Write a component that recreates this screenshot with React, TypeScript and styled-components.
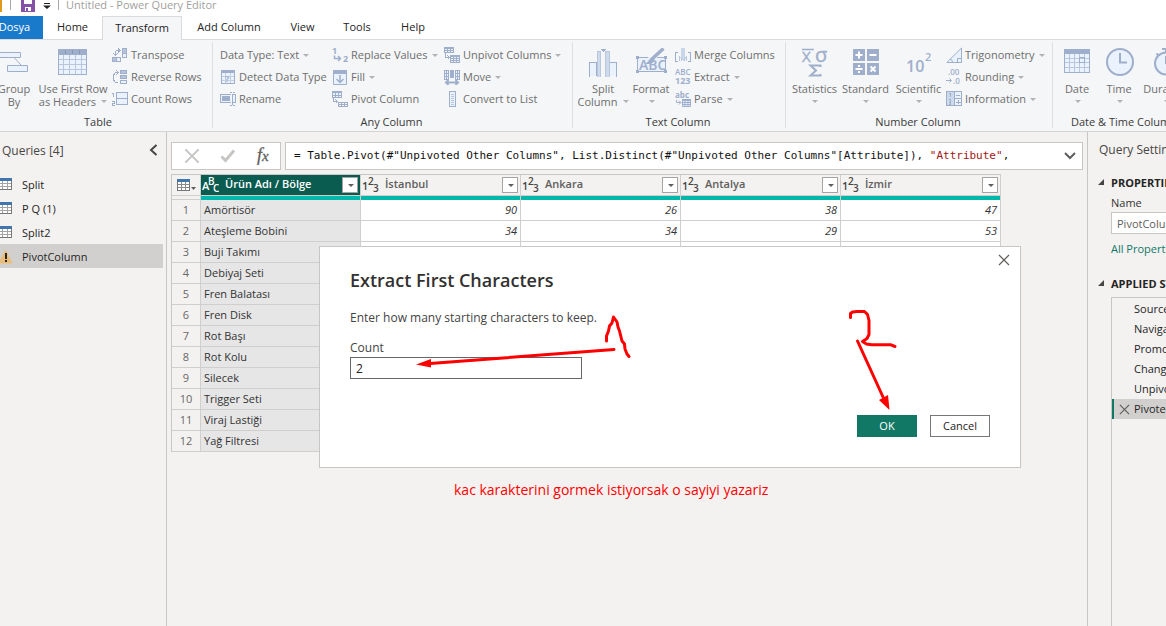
import React from 'react';
import styled, { createGlobalStyle, css } from 'styled-components';

const line = '#9fafcb';
const pale = '#e9f2fd';

const GlobalStyle = createGlobalStyle`
  *, *::before, *::after { box-sizing: border-box; }
  body { margin: 0; background: #f3f2f1; }
  body, button, input { font-family: "Open Sans", "Noto Sans", sans-serif; font-size: 11px; }
  button { border: 0; padding: 0; background: none; color: inherit; cursor: pointer; }
  ul { list-style: none; margin: 0; padding: 0; }
  h1, h2, h3, p { margin: 0; font-weight: 400; }
  svg { display: block; flex: none; }
`;

const Viewport = styled.div`
  position: relative;
  min-height: 100vh;
  overflow: hidden;
  display: flex;
  flex-direction: column;
  color: #333;
`;

/* The window hangs over the left edge of the screen. */
const AppWindow = styled.div`
  flex: 1;
  margin-left: -14px;
  display: flex;
  flex-direction: column;
  white-space: nowrap;
`;

/* ---------- title bar and tabs ---------- */

const TitleBar = styled.header`
  height: 16px;
  background: #fff;
  display: flex;
  align-items: flex-end;
  overflow: hidden;
`;

const Title = styled.h1`
  font-size: 11px;
  line-height: 18px;
  height: 20px;
  color: #a19f9d;
  padding-left: 7px;
`;

const Tabs = styled.nav`
  height: 24px;
  display: flex;
  background: #fff;
  border-bottom: 1px solid #dadbdc;
`;

const Tab = styled.button<{ $w: number; $kind?: 'file' | 'active' }>`
  width: ${p => p.$w}px;
  height: 23px;
  text-align: center;
  line-height: 22px;
  padding-bottom: 1px;
  color: #252423;
  ${p => p.$kind === 'file' && css`background: #1979ca; color: #fff;`}
  ${p => p.$kind === 'active' && css`
    height: 24px;
    padding-bottom: 3px;
    background: #f4f6f8;
    border: 1px solid #dadbdc;
    border-bottom: 0;
  `}
`;

/* ---------- ribbon ---------- */

const Ribbon = styled.section`
  height: 92px;
  display: flex;
  background: #f4f6f8;
  border-bottom: 1px solid #d5d4d3;
  color: #6f6e6d;
`;

const Group = styled.div<{ $w: number; $pad?: number }>`
  flex: none;
  width: ${p => p.$w}px;
  position: relative;
  padding-left: ${p => p.$pad ?? 7}px;
  display: grid;
  grid-template-rows: 70px 21px;
  &::after {
    content: '';
    position: absolute;
    right: 0;
    top: 2px;
    bottom: 3px;
    width: 1px;
    background: #dddfe1;
  }
`;

const GroupBody = styled.div`
  display: flex;
  align-items: flex-start;
  padding-top: 4px;
`;

const GroupLabel = styled.h2<{ $pad?: number }>`
  font-size: 11px;
  line-height: 24px;
  text-align: center;
  color: #3b3a39;
  margin-left: -${p => p.$pad ?? 7}px;
  padding-right: 3px;
`;

const Stack = styled.div<{ $w?: number }>`
  display: flex;
  flex-direction: column;
  align-items: flex-start;
  width: ${p => (p.$w ? `${p.$w}px` : 'auto')};
`;

const SmallButton = styled.button`
  height: 22px;
  display: flex;
  align-items: center;
  gap: 3px;
  line-height: 22px;
`;

const BigButton = styled.button<{ $w: number }>`
  flex: none;
  width: ${p => p.$w}px;
  display: flex;
  flex-direction: column;
  align-items: center;
  line-height: 13px;
  svg.big { margin: 4px 0 5px; }
`;

const Caption = styled.span`
  display: flex;
  align-items: center;
  justify-content: center;
  min-height: 13px;
  gap: 4px;
`;

const Arrow = styled.i<{ $dark?: boolean }>`
  width: 0;
  height: 0;
  margin-left: 1px;
  border: 3px solid transparent;
  border-top-color: ${p => (p.$dark ? '#605e5c' : '#b0b2b5')};
  border-bottom: 0;
`;

/* ---------- body ---------- */

const Body = styled.div`
  flex: 1;
  display: flex;
  min-height: 0;
`;

const Queries = styled.aside`
  flex: 0 0 181px;
  border-right: 1px solid #c8c6c4;
`;

const PaneHead = styled.div`
  height: 36px;
  padding: 0 8px 0 16px;
  display: flex;
  align-items: center;
  justify-content: space-between;
  h2 { font-size: 12px; color: #484644; }
`;

const QueryList = styled.ul`
  padding: 4px 3px 0 0;
`;

const Query = styled.li<{ $on?: boolean }>`
  height: 24px;
  padding: 1px 0 0 12px;
  display: flex;
  align-items: center;
  gap: 10px;
  line-height: 24px;
  color: #252423;
  background: ${p => (p.$on ? '#d2d0ce' : 'none')};
`;

const Main = styled.main`
  flex: 1;
  min-width: 0;
  padding: 10px 4px 0;
`;

const FormulaRow = styled.div`
  display: flex;
  gap: 4px;
  height: 28px;
`;

const FormulaTools = styled.div`
  flex: 0 0 110px;
  background: #fff;
  border: 1px solid #c8c6c4;
  display: flex;
  align-items: center;
  justify-content: space-between;
  padding: 0 10px 0 12px;
`;

const FormulaBox = styled.div`
  flex: 1;
  min-width: 0;
  background: #fff;
  border: 1px solid #c8c6c4;
  display: flex;
  align-items: center;
  justify-content: space-between;
  padding: 0 6px 0 8px;
  code { font: 11px/26px "DejaVu Sans Mono", monospace; color: #111; }
  em { font-style: normal; color: #a31515; }
`;

const Grid = styled.table`
  table-layout: fixed;
  width: 830px;
  margin-top: 4px;
  border-spacing: 0;
  border-left: 1px solid #c8c6c4;
  border-top: 1px solid #c8c6c4;
  th, td { padding: 0; border-right: 1px solid #d0cfce; }
`;

const HeadCell = styled.th<{ $on?: boolean }>`
  height: 20px;
  font-weight: 600;
  color: ${p => (p.$on ? '#fff' : '#605e5c')};
  background: ${p => (p.$on ? '#0b5c50' : '#f3f2f1')};
`;

const HeadInner = styled.div`
  display: flex;
  align-items: center;
  height: 20px;
  padding: 0 2px 0 1px;
  span { flex: 1; text-align: left; padding-left: 6px; line-height: 18px; height: 20px; }
`;

const FilterButton = styled.button`
  width: 16px;
  height: 16px;
  background: #fff;
  border: 1px solid #a6a4a2;
  display: grid;
  place-items: center;
`;

const QualityCell = styled.td<{ $blank?: boolean }>`
  height: 5px;
  border-top: 1px solid #d0cfce;
  background: ${p => (p.$blank ? '#f3f2f1' : '#01b8aa')};
  ${p => p.$blank && css`border-bottom: 1px solid #d0cfce;`}
`;

const RowNumber = styled.th`
  height: 21px;
  line-height: 20px;
  font-weight: 400;
  text-align: center;
  color: #6a6866;
  background: #f3f2f1;
  border-bottom: 1px solid #d0cfce;
`;

const NameCell = styled.td`
  height: 21px;
  line-height: 20px;
  background: #e6e6e6;
  border-bottom: 1px solid #d0cfce;
  text-indent: 3px;
`;

const NumberCell = styled.td`
  height: 21px;
  line-height: 20px;
  background: #fff;
  border-bottom: 1px solid #d0cfce;
  text-align: right;
  font-style: italic;
  &:not(:empty)::after { content: ''; padding-right: 3px; }
`;

/* ---------- settings pane ---------- */

const Settings = styled.aside`
  flex: 0 0 79px;
  overflow: hidden;
  border-left: 1px solid #c8c6c4;
  padding-left: 10px;
  display: flex;
  flex-direction: column;
`;

const SettingsTitle = styled.h2`
  font-size: 12px;
  line-height: 36px;
  color: #484644;
  padding-left: 1px;
`;

const SectionHead = styled.h3`
  display: flex;
  align-items: center;
  gap: 7px;
  height: 28px;
  font-size: 11px;
  font-weight: 700;
  color: #252423;
`;

const Field = styled.div`
  margin: 0 0 5px 13px;
  label { display: block; line-height: 14px; }
  input {
    width: 180px;
    height: 22px;
    margin-top: 2px;
    padding: 0 5px;
    border: 1px solid #c8c6c4;
    background: #fff;
    color: #605e5c;
  }
  a { display: block; line-height: 30px; color: #117865; text-decoration: none; }
`;

const Steps = styled.ul`
  flex: 1;
  width: 180px;
  margin-left: 13px;
  padding-top: 1px;
  border: 1px solid #c8c6c4;
  border-bottom: 0;
`;

const Step = styled.li<{ $on?: boolean }>`
  height: 20px;
  line-height: 20px;
  padding-left: ${p => (p.$on ? 5 : 22)}px;
  display: flex;
  align-items: center;
  gap: 4px;
  color: #252423;
  ${p => p.$on && css`background: #d2d0ce; border-left: 2px solid #117865;`}
`;

/* ---------- dialog and notes ---------- */

const Dialog = styled.form`
  position: absolute;
  left: 319px;
  top: 246px;
  width: 702px;
  border: 1px solid #c8c6c4;
  background: #fff;
  padding: 20px 30px 30px;
  font-size: 12px;
  h2 { font-size: 18px; font-weight: 600; line-height: 26px; color: #323130; }
  p { margin-top: 17px; line-height: 16px; color: #444; }
`;

const DialogField = styled.div`
  margin-top: 14px;
  label { display: block; line-height: 16px; color: #444; }
  input {
    display: block;
    width: 232px;
    height: 22px;
    margin-top: 1px;
    padding: 0 5px;
    border: 1px solid #666;
    font-size: 12px;
    color: #252423;
  }
`;

const Actions = styled.div`
  display: flex;
  justify-content: flex-end;
  gap: 13px;
  margin-top: 36px;
`;

const ActionButton = styled.button<{ $primary?: boolean }>`
  width: 60px;
  height: 22px;
  padding-bottom: 2px;
  border: 1px solid ${p => (p.$primary ? '#117865' : '#797775')};
  background: ${p => (p.$primary ? '#117865' : '#fff')};
  color: ${p => (p.$primary ? '#fff' : '#252423')};
`;

const CloseButton = styled.button`
  position: absolute;
  top: 7px;
  right: 10px;
`;

const Drawing = styled.svg`
  position: absolute;
  left: 0;
  top: 0;
  pointer-events: none;
`;

const Note = styled.p`
  position: absolute;
  left: 454px;
  top: 480px;
  font-size: 14px;
  line-height: 20px;
  color: #f00;
  white-space: nowrap;
`;

/* ---------- icons ---------- */

const Svg = ({ w = 16, h = 16, soft, big, children }: { w?: number; h?: number; soft?: boolean; big?: boolean; children: React.ReactNode }) => (
  <svg className={big ? 'big' : undefined} width={w} height={h} viewBox={`0 0 ${w} ${h}`} fill="none" stroke={line} shapeRendering={soft ? 'auto' : 'crispEdges'} aria-hidden="true">
    {children}
  </svg>
);

const glyph = { fill: line, stroke: 'none', fontFamily: '"Open Sans", sans-serif' };

const GroupByIcon = () => (
  <Svg w={30} h={29} big soft>
    <path d="M15 9.500 22 17" />
    <path d="M.5 4.500h21v5h-21zM8.500 17.500h20v6h-20z" fill={pale} />
  </Svg>
);
const HeadersIcon = () => (
  <Svg w={30} h={29} big>
    <path d="M.5 1.500h28v25h-28z" fill={pale} />
    <path d="M0 1h29v6H0z" fill={line} stroke="none" />
    <path d="M7.500 2v4M14.500 2v4M21.500 2v4" stroke="#8797b8" />
    <path d="M5.500 7v19M11.500 7v19M17.500 7v19M23.500 7v19M1 11.500h27M1 16.500h27M1 21.500h27" stroke="#b9c6dc" />
  </Svg>
);
const TransposeIcon = () => (
  <Svg>
    <path d="M10.500 1.500h4v9h-4zM.5 10.500h8v4h-8z" fill={pale} />
    <path d="M11 2h3v4h-3zM1 11h3v3H1z" fill="#b6c3da" stroke="none" />
    <path d="M10.500 6.500h4M4.500 10.500v4" />
    <path d="M3.500 9V4.500L5 3.500h3M1.500 6.500l2 2 2-2M6 1.500l2.500 2L6 5.500" />
  </Svg>
);
const ReverseIcon = () => (
  <Svg>
    <path d="M8.500 1.500h6v3h-6zM8.500 6.500h6v3h-6zM8.500 11.500h6v3h-6z" fill={pale} />
    <path d="M9 7h5v2H9zM9 2h5v2H9z" fill="#b6c3da" stroke="none" />
    <path d="M6 3.500H3.500L1.500 6v5l2 2.500H6M4 1l2.500 2.500L4 6" />
  </Svg>
);
const CountIcon = () => (
  <Svg>
    <path d="M4.500 1.500h11v12h-11zM4.500 7.500h11" fill={pale} />
    <path d="M0 2.500h1.500V6M0 10.500h2v2H.500v2h2" />
  </Svg>
);
const DetectIcon = () => (
  <Svg>
    <path d="M1.500 1.500h13v13h-13z" fill={pale} />
    <path d="M1 1h14v3H1z" fill={line} stroke="none" />
    <path d="M5.500 4v10M10.500 4v10M2 7.500h12M2 11.500h12" stroke="#c3cfe2" />
    <text x="5" y="13" fontSize="9" fontWeight="700" {...glyph}>?</text>
  </Svg>
);
const RenameIcon = () => (
  <Svg>
    <path d="M11 3.500H.500v8H11M13 3.500h2v8h-2" fill={pale} />
    <path d="M2 5h8v5H2z" fill={line} stroke="none" />
    <path d="M12 2.500v11M9.500 1.500h2M12.500 1.500h2M9.500 14.500h2M12.500 14.500h2" />
  </Svg>
);
const ReplaceIcon = () => (
  <Svg soft>
    <text x="0" y="7" fontSize="9" fontWeight="700" {...glyph}>1</text>
    <text x="11" y="15" fontSize="9" fontWeight="700" {...glyph}>2</text>
    <path d="M2.500 8.500v3H8M6 9l2.500 2.500L6 14" strokeWidth="1.500" />
  </Svg>
);
const FillIcon = () => (
  <Svg soft>
    <path d="M1.500 1.500h13v14h-13z" fill={pale} />
    <path d="M1 1h14v4H1z" fill={line} stroke="none" />
    <path d="M8 6v7M4.500 10 8 13.500l3.500-3.500" strokeWidth="1.500" />
  </Svg>
);
const PivotIcon = () => (
  <Svg>
    <path d="M.5 1.500h9v5h-9z" fill={pale} />
    <path d="M0 0h10v2H0z" fill={line} stroke="none" />
    <path d="M3.500 2v4M6.500 2v4M1 4.500h8M6.500 11.500h9v4h-9zM9.500 12v4M12.500 12v4M6.500 13.500h9" />
    <path d="M1.500 7v3.500H5M3.500 8.500l2 2-2 2" />
  </Svg>
);
const UnpivotIcon = () => (
  <Svg>
    <path d="M.5.500h9v5h-9zM6.500 8.500h9v7h-9z" fill={pale} />
    <path d="M3.500 1v4M6.500 1v4M.5 3.500h9M9.500 9v6M12.500 9v6M6.500 11.500h9M6.500 13.500h9M1.500 6v4.500H5M3.500 8.500l2 2-2 2" />
    <path d="M0 0h10v2H0zM6 8h10v2H6z" fill={line} stroke="none" />
  </Svg>
);
const MoveIcon = () => (
  <Svg>
    <path d="M.5 1.500h4v9h-4zM11.500 1.500h4v9h-4z" fill={pale} />
    <path d="M.5 4.500h4M.5 7.500h4M11.500 4.500h4M11.500 7.500h4M2.500 1v10M13.500 1v10" />
    <path d="M6 1h4v8H6z" fill={line} stroke="none" />
    <path d="M2 13.500h12M4.500 11 2 13.500 4.500 16M11.500 11l2.500 2.500-2.500 2.500" strokeWidth="2" shapeRendering="auto" />
  </Svg>
);
const ListIcon = () => (
  <Svg>
    <path d="M5.500.500h6v15h-6z" fill={pale} />
    <path d="M7 3.500h3M7 5.500h3M7 7.500h3M7 9.500h3M7 11.500h3M7 13.500h3" stroke="#b9c6dc" />
  </Svg>
);
const SplitIcon = () => (
  <Svg w={30} h={29} big>
    <path d="M8.500 28V14.500h-7v14M21.500 28V14.500h7v14" fill={pale} />
    <path d="M9 4h4v25H9zM17 4h4v25h-4z" fill="#cddaec" stroke="none" />
    <path d="M9 29V3.500h3.500V29M17.500 29V3.500h3.500V29" stroke="#b9c6dc" />
    <path d="M12 1h6l-3 3z" fill={line} stroke="none" />
  </Svg>
);
const FormatIcon = () => (
  <Svg w={32} h={29} big soft>
    <path d="M2.500 9.500h28v14h-28z" fill={pale} />
    <text x="4" y="22" fontSize="14" fontWeight="600" {...glyph}>ABC</text>
    <path d="M1 8h3v3H1zM1 22h3v3H1zM29 22h3v3h-3zM29 8h3v3h-3z" fill={line} stroke="none" />
    <path d="M27 1 15 12" stroke="#f4f6f8" strokeWidth="6" />
    <path d="M28.500.500 17 11" strokeWidth="3.500" />
    <path d="M17 9.500c-3 0-3 5-7 6 4 1.500 9 0 9.500-4z" fill={line} stroke="none" />
  </Svg>
);
const MergeIcon = () => (
  <Svg>
    <path d="M6 1h4v9h2l-4 4-4-4h2z" fill="#c9d6ea" stroke="none" />
    <path d="M3 5.500H.500v9H3M13 5.500h2.500v9H13" />
    <path d="M6.500 14v-3M9.500 14v-3M4.500 14V8.500M11.500 14V8.500" stroke="#b9c6dc" />
  </Svg>
);
const ExtractIcon = () => (
  <Svg soft>
    <text x="0" y="6" fontSize="8" fontWeight="600" {...glyph}>ABC</text>
    <text x="0" y="15" fontSize="9" fontWeight="700" {...glyph}>123</text>
  </Svg>
);
const ParseIcon = () => (
  <Svg soft>
    <text x="0" y="7" fontSize="8" fontWeight="700" {...glyph}>abc</text>
    <path d="M7.500 8.500h8v7h-8zM10 9v6M13 9v6M7.500 11.500h8M7.500 13.500h8" fill={pale} />
    <path d="M7 8h9v2H7z" fill={line} stroke="none" />
    <path d="M1.500 9v2.500h4M4 9.500l2 2-2 2" />
  </Svg>
);
const StatisticsIcon = () => (
  <Svg w={30} h={29} big soft>
    <path d="M2 1.500h12" strokeWidth="1.500" />
    <text x="2" y="14" fontSize="15" {...glyph} stroke={line} strokeWidth=".4">X</text>
    <text x="15" y="14" fontSize="20" {...glyph} stroke={line} strokeWidth=".4">σ</text>
    <path d="M20.500 19v-1.500h-10l5.500 5-5.500 5h10V26" strokeWidth="2" />
  </Svg>
);
const StandardIcon = () => (
  <Svg w={28} h={29} big soft>
    <path d="M1 1h12v12H1zM15 1h12v12H15zM1 15h12v12H1zM15 15h12v12H15z" fill={line} stroke="none" />
    <path d="M7 3.500v7M3.500 7h7M17.500 7h7M3.500 21h7M18.500 18.500l5 5M23.500 18.500l-5 5" stroke="#fff" strokeWidth="2" />
    <path d="M6 17h2v2H6zM6 23h2v2H6z" fill="#fff" stroke="none" />
  </Svg>
);
const ScientificIcon = () => (
  <Svg w={26} h={29} big soft>
    <text x="0" y="24" fontSize="16" fontWeight="600" {...glyph}>10</text>
    <text x="19" y="13" fontSize="11" fontWeight="600" {...glyph}>2</text>
  </Svg>
);
const TrigIcon = () => (
  <Svg soft>
    <path d="M.8 15.500 15.500 1v14.500zM11.500 15v-3.500h4M4 11.500q2.500 1 2.500 4" fill={pale} />
  </Svg>
);
const RoundingIcon = () => (
  <Svg soft>
    <text x="2" y="6" fontSize="8" fontWeight="600" {...glyph}>.00</text>
    <text x="7" y="15" fontSize="8" fontWeight="600" {...glyph}>.0</text>
    <path d="M0 11.500h5M3.500 9.500l2 2-2 2" />
  </Svg>
);
const InfoIcon = () => (
  <Svg>
    <path d="M.5.500h15v14H.500z" fill={pale} />
    <path d="M1 1h7v13H1z" fill="#cddaec" stroke="none" />
    <path d="M8.500.500v14M8.500 7.500h7M10 4.500h4M12.500 9v4M10 11h5M2.500 2.500H4V6M2.500 8.500h2v5h-2M3 11h1" />
  </Svg>
);
const DateIcon = () => (
  <Svg w={28} h={29} big>
    <path d="M1.500 1.500h25v23h-25z" fill={pale} />
    <path d="M1 1h26v5H1z" fill={line} stroke="none" />
    <path d="M6.500 6v18M11.500 6v18M16.500 6v18M21.500 6v18M2 10.500h24M2 14.500h24M2 19.500h24" stroke="#b9c6dc" />
    <path d="M16.500 9.500h5v5h-5z" />
  </Svg>
);
const ClockIcon = () => (
  <Svg w={30} h={29} big soft>
    <circle cx="16" cy="14" r="13" fill={pale} strokeWidth="2" />
    <path d="M16 5v9.500h7" strokeWidth="2" />
  </Svg>
);
const StopwatchIcon = () => (
  <Svg w={26} h={29} big soft>
    <circle cx="13" cy="15.500" r="11" fill={pale} strokeWidth="2" />
    <path d="M9 1h8M13 1v4M13 8v8M3.500 5.500l2 2" strokeWidth="2" />
  </Svg>
);
const TableIcon = () => (
  <svg width="14" height="13" viewBox="0 0 14 13" shapeRendering="crispEdges" fill="none" aria-hidden="true">
    <path d="M.5.500h13v11H.500z" fill="#fff" stroke="#777" />
    <path d="M0 0h14v3H0z" fill="#3f76ae" />
    <path d="M4.500 3v8M9.500 3v8M1 5.500h12M1 8.500h12" stroke="#a3a3a3" />
  </svg>
);
const WarningIcon = () => (
  <svg width="14" height="14" viewBox="0 0 14 14" aria-hidden="true">
    <path d="M7.500.500 14 13H1z" fill="#e9bd79" stroke="#e9bd79" strokeLinejoin="round" />
    <path d="M7 3h2v6H7zM7 10h2v2H7z" fill="#252423" />
  </svg>
);
const Cross = ({ size, color, width }: { size: number; color: string; width: number }) => (
  <svg width={size} height={size} viewBox="0 0 12 12" fill="none" stroke={color} strokeWidth={width} aria-hidden="true">
    <path d="M1 1l10 10M11 1 1 11" />
  </svg>
);
const TypeIcon = ({ glyphs, color }: { glyphs: string[]; color: string }) => (
  <svg width="17" height="18" viewBox="0 0 17 18" fill={color} fontFamily='"Open Sans", sans-serif' fontSize="11" fontWeight="600" aria-hidden="true">
    <text x="0" y="14">{glyphs[0]}</text>
    <text x="6" y="9" fontSize="10">{glyphs[1]}</text>
    <text x="11" y="16" fontSize="10">{glyphs[2]}</text>
  </svg>
);

/* ---------- composition ---------- */

const Small = ({ icon, label, arrow }: { icon?: React.ReactNode; label: string; arrow?: boolean }) => (
  <SmallButton type="button">{icon}<span>{label}</span>{arrow && <Arrow />}</SmallButton>
);
const Big = ({ icon, lines, w, arrow }: { icon: React.ReactNode; lines: string[]; w: number; arrow?: boolean }) => (
  <BigButton type="button" $w={w}>
    {icon}
    <Caption>{lines[0]}</Caption>
    <Caption>{lines[1]}{arrow && <Arrow />}</Caption>
  </BigButton>
);

const names = ['Amörtisör', 'Ateşleme Bobini', 'Buji Takımı', 'Debiyaj Seti', 'Fren Balatası', 'Fren Disk', 'Rot Başı', 'Rot Kolu', 'Silecek', 'Trigger Seti', 'Viraj Lastiği', 'Yağ Filtresi'];
const values = [[90, 26, 38, 47], [34, 34, 29, 53]];
const cities = ['İstanbul', 'Ankara', 'Antalya', 'İzmir'];
const steps = ['Source', 'Navigation', 'Promoted Headers', 'Changed Type', 'Unpivoted Other Columns'];

export default function App() {
  return (
    <Viewport>
      <GlobalStyle />
      <AppWindow>
        <TitleBar>
          <svg width="73" height="16" viewBox="0 0 73 16" aria-hidden="true">
            <path d="M8 0h8v12H8z" fill="#dd9a1b" />
            <path d="M24.500 0v10M72.500 0v10" stroke="#a8a8a8" shapeRendering="crispEdges" />
            <path d="M35 0h14v12H35z" fill="#8652a8" />
            <path d="M38 0h8v4h-8zM39 7h6v4h-6z" fill="#fff" />
            <path d="M40 8h2v3h-2z" fill="#8652a8" />
            <path d="M58 3h6v1h-6zM57 5.500h8L61 9z" fill="#222" />
          </svg>
          <Title>Untitled - Power Query Editor</Title>
        </TitleBar>
        <Tabs>
          <Tab $w={57} $kind="file">Dosya</Tab>
          <Tab $w={59}>Home</Tab>
          <Tab $w={80} $kind="active">Transform</Tab>
          <Tab $w={94}>Add Column</Tab>
          <Tab $w={53}>View</Tab>
          <Tab $w={56}>Tools</Tab>
          <Tab $w={56}>Help</Tab>
        </Tabs>
        <Ribbon>
          <Group $w={227} $pad={8}>
            <GroupBody>
              <Big w={40} icon={<GroupByIcon />} lines={['Group', 'By']} />
              <Big w={78} icon={<HeadersIcon />} lines={['Use First Row', 'as Headers']} arrow />
              <Stack>
                <Small icon={<TransposeIcon />} label="Transpose" />
                <Small icon={<ReverseIcon />} label="Reverse Rows" />
                <Small icon={<CountIcon />} label="Count Rows" />
              </Stack>
            </GroupBody>
            <GroupLabel $pad={8}>Table</GroupLabel>
          </Group>
          <Group $w={360}>
            <GroupBody>
              <Stack $w={112}>
                <Small label="Data Type: Text" arrow />
                <Small icon={<DetectIcon />} label="Detect Data Type" />
                <Small icon={<RenameIcon />} label="Rename" />
              </Stack>
              <Stack $w={112}>
                <Small icon={<ReplaceIcon />} label="Replace Values" arrow />
                <Small icon={<FillIcon />} label="Fill" arrow />
                <Small icon={<PivotIcon />} label="Pivot Column" />
              </Stack>
              <Stack>
                <Small icon={<UnpivotIcon />} label="Unpivot Columns" arrow />
                <Small icon={<MoveIcon />} label="Move" arrow />
                <Small icon={<ListIcon />} label="Convert to List" />
              </Stack>
            </GroupBody>
            <GroupLabel>Any Column</GroupLabel>
          </Group>
          <Group $w={213} $pad={6}>
            <GroupBody>
              <Big w={48} icon={<SplitIcon />} lines={['Split', 'Column']} arrow />
              <Big w={48} icon={<FormatIcon />} lines={['Format', '']} arrow />
              <Stack>
                <Small icon={<MergeIcon />} label="Merge Columns" />
                <Small icon={<ExtractIcon />} label="Extract" arrow />
                <Small icon={<ParseIcon />} label="Parse" arrow />
              </Stack>
            </GroupBody>
            <GroupLabel $pad={6}>Text Column</GroupLabel>
          </Group>
          <Group $w={267} $pad={3}>
            <GroupBody>
              <Big w={51} icon={<StatisticsIcon />} lines={['Statistics', '']} arrow />
              <Big w={51} icon={<StandardIcon />} lines={['Standard', '']} arrow />
              <Big w={55} icon={<ScientificIcon />} lines={['Scientific', '']} arrow />
              <Stack>
                <Small icon={<TrigIcon />} label="Trigonometry" arrow />
                <Small icon={<RoundingIcon />} label="Rounding" arrow />
                <Small icon={<InfoIcon />} label="Information" arrow />
              </Stack>
            </GroupBody>
            <GroupLabel $pad={3}>Number Column</GroupLabel>
          </Group>
          <Group $w={145} $pad={3}>
            <GroupBody>
              <Big w={42} icon={<DateIcon />} lines={['Date', '']} arrow />
              <Big w={42} icon={<ClockIcon />} lines={['Time', '']} arrow />
              <Big w={52} icon={<StopwatchIcon />} lines={['Duration', '']} arrow />
            </GroupBody>
            <GroupLabel $pad={3}>Date &amp; Time Column</GroupLabel>
          </Group>
        </Ribbon>
        <Body>
          <Queries>
            <PaneHead>
              <h2>Queries [4]</h2>
              <svg width="9" height="12" viewBox="0 0 9 12" fill="none" stroke="#484644" strokeWidth="2" aria-hidden="true"><path d="M7.500 1 2 6l5.500 5" /></svg>
            </PaneHead>
            <QueryList>
              <Query><TableIcon /><span>Split</span></Query>
              <Query><TableIcon /><span>P Q (1)</span></Query>
              <Query><TableIcon /><span>Split2</span></Query>
              <Query $on><WarningIcon /><span>PivotColumn</span></Query>
            </QueryList>
          </Queries>
          <Main>
            <FormulaRow>
              <FormulaTools>
                <Cross size={16} color="#c8c6c4" width={1.5} />
                <svg width="16" height="14" viewBox="0 0 16 14" fill="none" stroke="#c8c6c4" strokeWidth="3" aria-hidden="true"><path d="M1.500 7.500 5.500 11.500 14 1.500" /></svg>
                <svg width="14" height="18" viewBox="0 0 14 18" fill="#605e5c" stroke="#605e5c" strokeWidth=".3" fontFamily='"Liberation Serif", serif' fontStyle="italic" aria-hidden="true"><text x="1" y="14" fontSize="18">f</text><text x="6" y="14" fontSize="15">x</text></svg>
              </FormulaTools>
              <FormulaBox>
                <code>= Table.Pivot(#"Unpivoted Other Columns", List.Distinct(#"Unpivoted Other Columns"[Attribute]), <em>"Attribute"</em>,</code>
                <svg width="12" height="8" viewBox="0 0 12 8" fill="none" stroke="#605e5c" strokeWidth="2" aria-hidden="true"><path d="M1 1l5 5 5-5" /></svg>
              </FormulaBox>
            </FormulaRow>
            <Grid>
              <colgroup><col width="29" /><col width="160" /><col width="160" /><col width="160" /><col width="160" /><col width="160" /></colgroup>
              <thead>
                <tr>
                  <HeadCell>
                    <svg width="28" height="20" viewBox="0 0 28 20" shapeRendering="crispEdges" fill="none" aria-hidden="true">
                      <path d="M5.500 4.500h12v11h-12z" fill="#fff" stroke="#777" />
                      <path d="M5 4h13v3H5z" fill="#3f76ae" />
                      <path d="M9.500 7v8M13.500 7v8M6 9.500h11M6 12.500h11" stroke="#8a8a8a" />
                      <path d="M19 12h5l-2.500 3z" fill="#605e5c" shapeRendering="auto" />
                    </svg>
                  </HeadCell>
                  <HeadCell $on><HeadInner><TypeIcon glyphs={['A', 'B', 'C']} color="#fff" /><span>Ürün Adı / Bölge</span><FilterButton aria-label="Filter"><Arrow $dark /></FilterButton></HeadInner></HeadCell>
                  {cities.map(c => (
                    <HeadCell key={c}><HeadInner><TypeIcon glyphs={['1', '2', '3']} color="#484644" /><span>{c}</span><FilterButton aria-label="Filter"><Arrow $dark /></FilterButton></HeadInner></HeadCell>
                  ))}
                </tr>
              </thead>
              <tbody>
                <tr><QualityCell $blank /><QualityCell /><QualityCell /><QualityCell /><QualityCell /><QualityCell /></tr>
                {names.map((n, i) => (
                  <tr key={n}>
                    <RowNumber scope="row">{i + 1}</RowNumber>
                    <NameCell>{n}</NameCell>
                    {cities.map((c, j) => <NumberCell key={c}>{values[i]?.[j]}</NumberCell>)}
                  </tr>
                ))}
              </tbody>
            </Grid>
          </Main>
          <Settings>
            <SettingsTitle>Query Settings</SettingsTitle>
            <SectionHead>
              <svg width="6" height="6" viewBox="0 0 6 6" aria-hidden="true"><path d="M6 0v6H0z" fill="#484644" /></svg>
              PROPERTIES
            </SectionHead>
            <Field>
              <label htmlFor="query-name">Name</label>
              <input id="query-name" defaultValue="PivotColumn" />
              <a href="#properties">All Properties</a>
            </Field>
            <SectionHead>
              <svg width="6" height="6" viewBox="0 0 6 6" aria-hidden="true"><path d="M6 0v6H0z" fill="#484644" /></svg>
              APPLIED STEPS
            </SectionHead>
            <Steps>
              {steps.map(s => <Step key={s}>{s}</Step>)}
              <Step $on><Cross size={11} color="#605e5c" width={1.3} />Pivoted Column</Step>
            </Steps>
          </Settings>
        </Body>
      </AppWindow>

      <Dialog onSubmit={e => e.preventDefault()}>
        <CloseButton type="button" aria-label="Close"><Cross size={12} color="#605e5c" width={1.2} /></CloseButton>
        <h2>Extract First Characters</h2>
        <p>Enter how many starting characters to keep.</p>
        <DialogField>
          <label htmlFor="count">Count</label>
          <input id="count" defaultValue="2" />
        </DialogField>
        <Actions>
          <ActionButton $primary type="submit">OK</ActionButton>
          <ActionButton type="button">Cancel</ActionButton>
        </Actions>
        <Drawing width="700" height="220" viewBox="320 247 700 220" fill="none" stroke="#f00" strokeWidth="3" strokeLinecap="round" strokeLinejoin="round" aria-hidden="true">
          <path d="M606.500 341v-5l2-5 1-5 2.500-3 1.500-6 3.500 5 1 5 1.500 4 1.500 6 1 4 2.500 3 .500 5 2 5 2 2.500" />
          <path d="M614 349.500 430 363.500" />
          <path d="M416 364.500 431 359v8.500z" fill="#f00" stroke="none" />
          <path d="M850.500 317.500v-4l2-1.500 5-.500h7l3 3 1.500 6v14l-2 4-4.500 3 4 2.500 5 .700h19l4.500 1.800" />
          <path d="M857.500 341 883 397" />
          <path d="M889.500 410 879 400l9-5z" fill="#f00" stroke="none" />
        </Drawing>
      </Dialog>
      <Note>kac karakterini gormek istiyorsak o sayiyi yazariz</Note>
    </Viewport>
  );
}
